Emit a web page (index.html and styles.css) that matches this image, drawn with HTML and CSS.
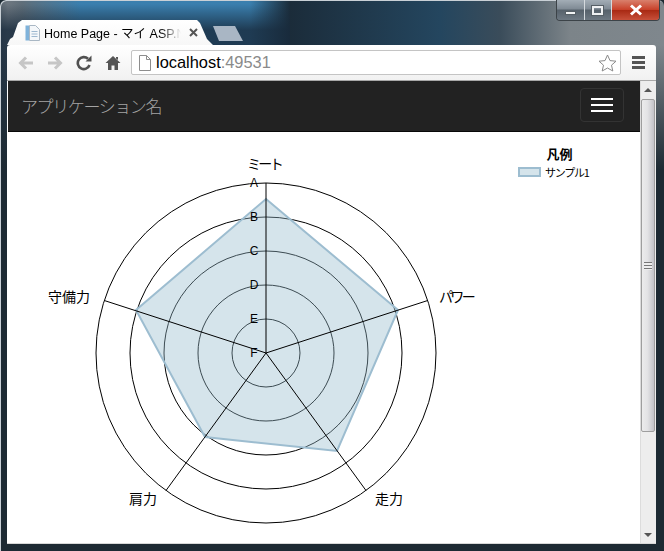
FILE: index.html
```html
<!DOCTYPE html>
<html lang="ja">
<head>
    <meta charset="UTF-8">
    <title>Home Page - マイ ASP.NET アプリケーション</title>
    <link rel="stylesheet" href="styles.css">
</head>
<body>
<div class="window">
    <div class="caption-buttons">
        <div class="cap-btn cap-min"><span class="min-bar"></span></div>
        <div class="cap-btn cap-max"><span class="max-box"></span></div>
        <div class="cap-btn cap-close">
            <svg width="16" height="12" viewBox="0 0 16 12"><path d="M3 1.5 L13 10.5 M13 1.5 L3 10.5" stroke="#fff" stroke-width="3" fill="none"/></svg>
        </div>
    </div>

    <div class="tabstrip">
        <div class="tab">
            <svg class="favicon" width="15" height="16" viewBox="0 0 15 16">
                <rect x="0.5" y="0.5" width="4" height="15" fill="#7fb2da"/>
                <path d="M4.5 0.5 H10.5 L14.5 4.5 V15.5 H4.5 Z" fill="#f4f7fa" stroke="#a9b7c4"/>
                <path d="M6.5 6.5 H12.5 M6.5 9 H12.5 M6.5 11.5 H12.5" stroke="#9db8d0"/>
            </svg>
            <span class="tab-title">Home Page - マイ ASP.N</span>
            <svg class="tab-close" width="9" height="9" viewBox="0 0 9 9"><path d="M1 1 L8 8 M8 1 L1 8" stroke="#555" stroke-width="2"/></svg>
        </div>
        <div class="tab-new"></div>
    </div>

    <div class="toolbar">
        <svg class="tool" width="18" height="16" viewBox="0 0 18 16"><path d="M16 8 H4 M9 2.5 L3.5 8 L9 13.5" stroke="#c6c6c6" stroke-width="3" fill="none"/></svg>
        <svg class="tool" width="18" height="16" viewBox="0 0 18 16"><path d="M2 8 H14 M9 2.5 L14.5 8 L9 13.5" stroke="#c6c6c6" stroke-width="3" fill="none"/></svg>
        <svg class="tool" width="16" height="16" viewBox="0 0 16 16"><path d="M13.5 10 A6 6 0 1 1 12 3.8" stroke="#505050" stroke-width="2.6" fill="none"/><path d="M9.5 6.5 H15.5 V0.5 Z" fill="#505050"/></svg>
        <svg class="tool" width="16" height="16" viewBox="0 0 16 16"><path d="M8 1 L15.5 8 H13 V15 H9.5 V10.5 H6.5 V15 H3 V8 H0.5 Z M11 2 H13 V5 L11 3.5 Z" fill="#555"/></svg>
        <div class="omnibox">
            <svg class="page-icon" width="14" height="16" viewBox="0 0 14 16"><path d="M1.5 0.5 H8.5 L12.5 4.5 V15.5 H1.5 Z M8.5 0.5 V4.5 H12.5" fill="#fff" stroke="#8d8d8d"/></svg>
            <span class="url">localhost<span class="url-port">:49531</span></span>
            <svg class="star" width="19" height="18" viewBox="0 0 19 18"><path d="M9.5 1 L12 6.6 L18 7.2 L13.5 11.2 L14.8 17 L9.5 14 L4.2 17 L5.5 11.2 L1 7.2 L7 6.6 Z" fill="#fff" stroke="#8a8a8a"/></svg>
        </div>
        <div class="chrome-menu"><span></span><span></span><span></span></div>
    </div>

    <div class="viewport">
        <div class="page">
            <div class="navbar">
                <span class="brand">アプリケーション名</span>
                <div class="toggle"><span></span><span></span><span></span></div>
            </div>
            <div class="chart-area">
                <svg class="radar" width="632" height="412" viewBox="8 132 632 412">
                    <g class="rings">
                        <circle cx="266" cy="353" r="34"/>
                        <circle cx="266" cy="353" r="68"/>
                        <circle cx="266" cy="353" r="102"/>
                        <circle cx="266" cy="353" r="136"/>
                        <circle cx="266" cy="353" r="170"/>
                    </g>
                    <polygon class="data" points="266,199 398,310 337,451 205,437 136,310"/>
                    <g class="spokes">
                        <line x1="266" y1="353" x2="266" y2="183"/>
                        <line x1="266" y1="353" x2="427.7" y2="300.5"/>
                        <line x1="266" y1="353" x2="366" y2="490.5"/>
                        <line x1="266" y1="353" x2="166" y2="490.5"/>
                        <line x1="266" y1="353" x2="104.3" y2="300.5"/>
                    </g>
                    <g class="ticks">
                        <text x="254" y="187">A</text>
                        <text x="254" y="221">B</text>
                        <text x="254" y="255">C</text>
                        <text x="254" y="289">D</text>
                        <text x="254" y="323">E</text>
                        <text x="254" y="357">F</text>
                    </g>
                    <g class="axis-labels">
                        <text class="kana" x="264" y="169">ミート</text>
                        <text class="kana" x="456" y="302">パワー</text>
                        <text x="389" y="504">走力</text>
                        <text x="143" y="504">肩力</text>
                        <text x="69" y="302">守備力</text>
                    </g>
                </svg>
                <div class="legend">
                    <div class="legend-title">凡例</div>
                    <div class="legend-row">
                        <span class="swatch"></span>
                        <span class="legend-label">サンプル1</span>
                    </div>
                </div>
            </div>
        </div>
        <div class="scrollbar">
            <div class="arrow-up"></div>
            <div class="thumb"><div class="grip"></div></div>
            <div class="arrow-down"></div>
        </div>
    </div>
</div>
</body>
</html>
```

FILE: styles.css
```css
html, body {
    margin: 0;
    height: 100%;
    overflow: hidden;
}
body {
    font-family: "Liberation Sans", "Noto Sans CJK JP", sans-serif;
    background: #1d2a33;
}
.window {
    position: relative;
    width: 664px;
    height: 551px;
    box-sizing: border-box;
    padding: 0 8px 7px 7px;
    display: flex;
    flex-direction: column;
    border-radius: 6px 6px 0 0;
    box-shadow: inset 1px 1px 0 #c9d0d6;
    background:
        linear-gradient(to bottom, transparent 0, transparent 45px, #1d2a33 170px),
        linear-gradient(to bottom, transparent 4px, rgba(24, 42, 60, 0.8) 30px) no-repeat 0 0 / 290px 100%,
        linear-gradient(to right, #5b6670 0, #6d7780 8px, #5f6e79 22px, #3a7fae 80px, #3a7fae 250px, #1b2c3a 290px, #24465f 440px, #3a4c5a 500px, #7c8489 570px, #7f878d 664px);
}

/* window buttons */
.caption-buttons {
    position: absolute;
    top: 0;
    right: 4px;
    width: 102px;
    height: 20px;
    display: flex;
    border: 1px solid #3c4348;
    border-top: 0;
    border-radius: 0 0 4px 4px;
    overflow: hidden;
}
.cap-btn {
    height: 20px;
    display: flex;
    align-items: center;
    justify-content: center;
    box-sizing: border-box;
}
.cap-min, .cap-max {
    width: 27.5px;
    background: linear-gradient(#a3adb6, #7f8a94 45%, #56616b 50%, #6d7882);
    border-right: 1px solid #d5dade;
}
.cap-close {
    flex: 1;
    background: linear-gradient(#d9806c, #c9412a 48%, #a92a14 52%, #c7503a);
}
.min-bar {
    width: 11px;
    height: 4px;
    margin-top: 6px;
    background: #f1f3f4;
    border: 1px solid #565f66;
    box-sizing: border-box;
}
.max-box {
    width: 11px;
    height: 9px;
    box-sizing: border-box;
    border: 2px solid #eef0f2;
    outline: 1px solid #565f66;
}

/* tabs */
.tabstrip {
    height: 45px;
    flex: none;
    display: flex;
    align-items: flex-end;
}
.tab {
    width: 206px;
    height: 25px;
    box-sizing: border-box;
    padding: 0 14px 0 18px;
    display: flex;
    align-items: center;
    gap: 4px;
    background: linear-gradient(#ffffff, #f7f7f7);
    clip-path: polygon(0 100%, 3px 19px, 6px 17px, 11px 3px, 15px 0, 190px 0, 193px 3px, 200px 19px, 206px 100%);
}
.favicon {
    flex: none;
}
.tab-title {
    width: 137px;
    white-space: nowrap;
    font-size: 12.5px;
    color: #000;
    flex: none;
    -webkit-mask-image: linear-gradient(to right, #000 85%, transparent);
    mask-image: linear-gradient(to right, #000 85%, transparent);
}
.tab-close {
    flex: none;
    margin-left: 4px;
}
.tab-new {
    width: 30px;
    height: 15px;
    margin: 0 0 4px 0;
    background: #a9b6c4;
    clip-path: polygon(0 0, 22px 0, 30px 100%, 6px 100%);
}

/* toolbar */
.toolbar {
    height: 36px;
    flex: none;
    box-sizing: border-box;
    display: flex;
    align-items: center;
    padding-left: 10px;
    background: linear-gradient(#ffffff, #f1f1f1);
    border-bottom: 1px solid #a8a8a8;
    border-radius: 3px 3px 0 0;
}
.tool {
    flex: none;
    margin-right: 11px;
}
.tool:nth-child(2) {
    margin-right: 12px;
}
.tool:nth-child(3) {
    margin-right: 13px;
}
.tool:nth-child(4) {
    margin-right: 10px;
}
.omnibox {
    width: 490px;
    height: 25px;
    box-sizing: border-box;
    padding: 0 3px 0 6px;
    display: flex;
    align-items: center;
    gap: 4px;
    background: #fff;
    border: 1px solid #c4c4c4;
    border-radius: 2px;
}
.url {
    flex: 1;
    font-size: 16.4px;
    color: #000;
}
.url-port {
    color: #8a8a8a;
}
.chrome-menu {
    display: flex;
    flex-direction: column;
    gap: 2px;
    margin-left: 11px;
}
.chrome-menu span {
    display: block;
    width: 13px;
    height: 3px;
    background: #555;
}

/* page */
.viewport {
    flex: 1;
    display: flex;
    min-height: 0;
    padding-left: 1px;
    background: #fff;
    border-bottom: 1px solid #d8d8d8;
}
.page {
    width: 632px;
    flex: none;
    display: flex;
    flex-direction: column;
}
.navbar {
    height: 51px;
    flex: none;
    box-sizing: border-box;
    padding: 0 16px 2px 13px;
    display: flex;
    align-items: center;
    justify-content: space-between;
    background: #222;
    border-bottom: 1px solid #080808;
}
.brand {
    font-family: "Noto Sans CJK JP", sans-serif;
    font-size: 17px;
    font-weight: 300;
    letter-spacing: -1.4px;
    color: #a4a4a4;
    white-space: nowrap;
}
.toggle {
    width: 44px;
    height: 34px;
    box-sizing: border-box;
    display: flex;
    flex-direction: column;
    align-items: center;
    justify-content: center;
    gap: 4px;
    border: 1px solid #333;
    border-radius: 4px;
}
.toggle span {
    display: block;
    width: 22px;
    height: 2px;
    background: #fff;
}
.chart-area {
    position: relative;
    flex: 1;
    min-height: 0;
}
.radar {
    display: block;
}
.rings circle {
    fill: none;
    stroke: #000;
    stroke-width: 1;
}
.data {
    fill: rgba(151, 187, 205, 0.4);
    stroke: #9dbdd0;
    stroke-width: 2;
}
.spokes line {
    stroke: #000;
    stroke-width: 1;
}
.ticks text {
    font-family: "Liberation Sans", sans-serif;
    font-size: 12px;
    text-anchor: middle;
    fill: #000;
}
.axis-labels text {
    font-family: "Noto Sans CJK JP", sans-serif;
    font-size: 14px;
    text-anchor: middle;
    fill: #000;
}
.axis-labels .kana {
    letter-spacing: -2.6px;
}

/* legend sits over the free canvas of the chart */
.legend {
    position: absolute;
    top: 13px;
    left: 510px;
    font-family: "Noto Sans CJK JP", sans-serif;
    font-size: 11px;
    line-height: 16px;
    color: #000;
}
.legend-title {
    font-size: 13px;
    font-weight: bold;
    line-height: 18px;
    text-align: center;
    margin-left: 12px;
    margin-bottom: 1px;
}
.legend-row {
    display: flex;
    align-items: center;
    gap: 4px;
    white-space: nowrap;
}
.legend-label {
    letter-spacing: -1.2px;
}
.swatch {
    width: 23px;
    height: 10px;
    box-sizing: border-box;
    background: #d5e4eb;
    border: 2px solid #9dbdd0;
}

/* scrollbar */
.scrollbar {
    width: 16px;
    flex: none;
    display: flex;
    flex-direction: column;
    align-items: center;
    background: #ededed;
    box-shadow: inset 1px 0 0 #dcdcdc;
}
.arrow-up {
    margin-top: 7px;
    border: 4px solid transparent;
    border-top: 0;
    border-bottom: 4px solid #555;
    flex: none;
}
.thumb {
    width: 14px;
    height: 333px;
    margin-top: 7px;
    box-sizing: border-box;
    display: flex;
    align-items: center;
    justify-content: center;
    background: linear-gradient(to right, #ececec, #e3e3e5 45%, #c3c3c8);
    border: 1px solid #9e9e9e;
    border-radius: 2px;
    flex: none;
}
.grip {
    width: 8px;
    height: 8px;
    background: repeating-linear-gradient(#777 0, #777 1px, #eee 1px, #eee 3px);
}
.arrow-down {
    margin-top: auto;
    margin-bottom: 6px;
    border: 4px solid transparent;
    border-bottom: 0;
    border-top: 4px solid #555;
    flex: none;
}
```
